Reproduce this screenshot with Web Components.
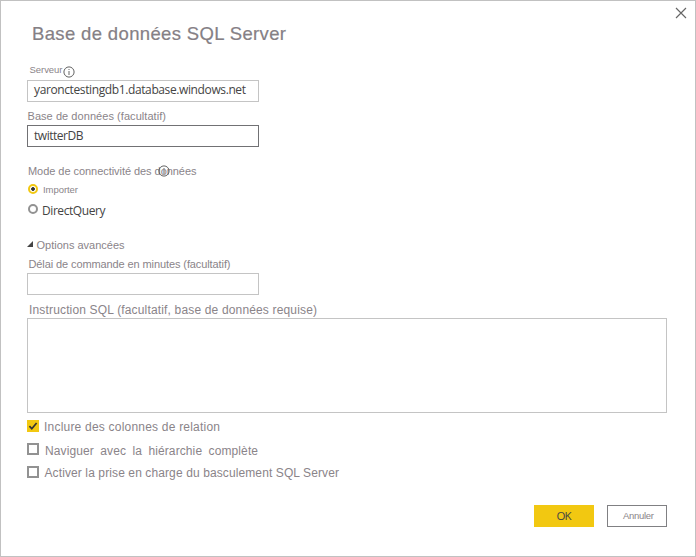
<!DOCTYPE html>
<html lang="fr"><head><meta charset="utf-8"><title>Base de données SQL Server</title>
<style>html,body{margin:0;background:#fff}</style></head>
<body><sql-dialog></sql-dialog>
<script>
const define = (name, html, setup) => {
  const template = document.createElement('template');
  template.innerHTML = html;
  customElements.define(name, class extends HTMLElement {
    constructor() {
      super();
      this.attachShadow({mode: 'open'}).append(template.content.cloneNode(true));
    }
    connectedCallback() { if (setup) setup(this, this.shadowRoot); }
  });
};

// Text line whose tracking is adjusted to fill the width given in "fit".
define('fit-text', `<style>
  :host{display:block;flex:none;font:11px/14px "Liberation Sans",Arial,sans-serif;color:#8a8489;white-space:pre;height:14px}
  :host([face=ui]){font-family:"Open Sans","Noto Sans",sans-serif;color:#444}
  span{display:inline-block}
</style><span><slot></slot></span>`, (el, root) => {
  const span = root.querySelector('span');
  if (el.hasAttribute('size')) el.style.fontSize = el.getAttribute('size') + 'px';
  const target = +el.getAttribute('fit');
  const n = el.textContent.length;
  const gap = (target - span.getBoundingClientRect().width) / (n - 1);
  span.style.letterSpacing = gap + 'px';
  span.style.marginRight = -gap + 'px';
});

define('text-field', `<style>
  :host{display:block;box-sizing:border-box;width:232px;height:22px;border:1px solid #c4c4c4;padding:2px 0 0 6px}
  :host([active]){border-color:#717174;padding-top:3px}
  :host([area]){width:640px;height:95px}
</style><slot></slot>`);

define('info-icon', `<style>:host{display:block;width:12px;height:12px;flex:none}svg{display:block}</style>
<svg width="12" height="12" viewBox="0 0 12 12"><circle cx="6" cy="6" r="5.1" fill="none" stroke="#5a5a5a" stroke-width=".95"/><path d="M6 5v4M6 3v1" stroke="#666" stroke-width="1"/></svg>`);

define('radio-dot', `<style>
  :host{display:block;box-sizing:border-box;width:10px;height:10px;border:2px solid #929292;border-radius:50%;flex:none}
  :host([checked]){border-color:#f2c811;background:radial-gradient(circle,#333 1.5px,#fff 2.2px)}
</style>`);

define('check-box', `<style>
  :host{display:block;box-sizing:border-box;width:12px;height:12px;border:2px solid #929292;flex:none}
  :host([checked]){border:0;background:#f2c811}
  svg{display:none}:host([checked]) svg{display:block}
</style><svg width="12" height="12" viewBox="0 0 12 12"><path d="M2.4 6.2 4.8 8.7 9.6 3" fill="none" stroke="#333" stroke-width="1.7"/></svg>`);

define('dialog-button', `<style>
  :host{display:flex;justify-content:center;box-sizing:border-box;width:60px;height:22px;border:1px solid #808083;padding-top:3px}
  :host([primary]){border-color:#f2c811;background:#f2c811}
</style><slot></slot>`);

define('close-icon', `<style>:host{display:block;width:12px;height:12px}svg{display:block}</style>
<svg width="12" height="12" viewBox="0 0 12 12"><path d="M1 1 11 11M11 1 1 11" stroke="#666" stroke-width="1.15"/></svg>`);

define('sql-dialog', `<style>
  :host{display:block;box-sizing:border-box;width:696px;height:557px;border:1px solid #c1c1c1;background:#fff;overflow:hidden}
  header{display:flex;justify-content:space-between;padding:6px 8px 0 31px;height:56px;box-sizing:border-box}
  header fit-text{margin-top:20px}
  main{padding-left:26px}
  .row{display:flex;align-items:flex-start}
  .mode info-icon{margin-left:-38.5px}
  .buttons{display:flex;gap:13px;margin:27px 0 0 507px}
</style>
<header><fit-text size="18.5" fit="254" style="color:#858085;-webkit-text-stroke:.2px #858085">Base de données SQL Server</fit-text><close-icon></close-icon></header>
<main>
  <div class="row" style="height:23px"><fit-text size="9.5" fit="33" style="margin:6px 0 0 2.5px">Serveur</fit-text><info-icon style="margin:9px 0 0 .5px"></info-icon></div>
  <text-field><fit-text face="ui" size="12" fit="212">yaronctestingdb1.database.windows.net</fit-text></text-field>
  <div class="row" style="height:23px"><fit-text fit="138.5" style="margin:7px 0 0 .5px">Base de données (facultatif)</fit-text></div>
  <text-field active><fit-text face="ui" size="12" fit="49.5">twitterDB</fit-text></text-field>
  <div class="row mode" style="height:37px"><fit-text fit="168.5" style="margin:17px 0 0 1px">Mode de connectivité des données</fit-text><info-icon style="margin-top:18px"></info-icon></div>
  <div class="row" style="height:20px"><radio-dot checked style="margin-left:1px"></radio-dot><fit-text size="9.5" fit="35" style="margin:-1px 0 0 5px">Importer</fit-text></div>
  <div class="row" style="height:34px"><radio-dot style="margin-left:1px"></radio-dot><fit-text face="ui" size="12" fit="63.5" style="margin:0 0 0 4px">DirectQuery</fit-text></div>
  <div class="row" style="height:19px"><svg width="6" height="6" viewBox="0 0 6 6" style="margin-top:3px"><path d="M6 0V6H0Z" fill="#444"/></svg><fit-text fit="88" style="margin:0 0 0 3.5px">Options avancées</fit-text></div>
  <div class="row" style="height:16px"><fit-text fit="202" style="margin:0 0 0 1.5px">Délai de commande en minutes (facultatif)</fit-text></div>
  <text-field></text-field>
  <div class="row" style="height:23px"><fit-text size="12" fit="288" style="margin:8px 0 0 2px">Instruction SQL (facultatif, base de données requise)</fit-text></div>
  <text-field area></text-field>
  <div class="row" style="height:23px;margin-top:7px"><check-box checked></check-box><fit-text size="12" fit="176" style="margin:0 0 0 5px">Inclure des colonnes de relation</fit-text></div>
  <div class="row" style="height:23px"><check-box></check-box><fit-text size="12" fit="213" style="margin:1px 0 0 6px;word-spacing:3px">Naviguer avec la hiérarchie complète</fit-text></div>
  <div class="row" style="height:12px"><check-box></check-box><fit-text size="12" fit="294.5" style="margin:0 0 0 5.5px">Activer la prise en charge du basculement SQL Server</fit-text></div>
  <div class="buttons"><dialog-button primary><fit-text face="ui" size="11.5" fit="15">OK</fit-text></dialog-button><dialog-button><fit-text size="9.5" fit="31" style="margin-left:3px">Annuler</fit-text></dialog-button></div>
</main>`);
</script></body></html>
